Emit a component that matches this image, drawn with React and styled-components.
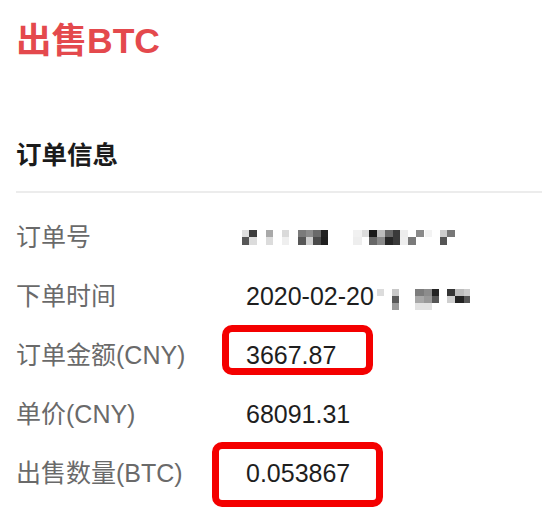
import styled, { createGlobalStyle } from "styled-components";

const GlobalStyle = createGlobalStyle`
    html, body {
        margin: 0;
        padding: 0;
        background: #ffffff;
    }
    body {
        font-family: "Liberation Sans", "Noto Sans CJK SC", sans-serif;
        -webkit-font-smoothing: antialiased;
    }
`;

const Page = styled.div`
    width: 542px;
    height: 514px;
    overflow: hidden;
    padding: 21px 0 0 16px;
    box-sizing: border-box;
`;

const Title = styled.h1`
    margin: 0;
    font-size: 35.5px;
    line-height: 40px;
    font-weight: 700;
    color: #e4494d;
`;

const SectionTitle = styled.h2`
    margin: 76px 0 0;
    font-size: 25.5px;
    line-height: 36px;
    font-weight: 700;
    color: #1b1b1b;
`;

const Divider = styled.div`
    margin-top: 18px;
    height: 2px;
    background: #ececec;
`;

const List = styled.div`
    margin-top: 15px;
    display: flex;
    flex-direction: column;
`;

const Row = styled.div`
    display: grid;
    grid-template-columns: 230px 1fr;
    height: 59px;
    line-height: 59px;
    font-size: 25px;
`;

const Label = styled.span`
    color: #6a6a6a;
    white-space: nowrap;
`;

const Value = styled.span`
    position: relative;
    color: #1e1e1e;
    display: flex;
    align-items: center;
    white-space: nowrap;
`;

const Highlight = styled.span`
    position: absolute;
    left: ${(p) => p.$left}px;
    top: ${(p) => p.$top}px;
    width: ${(p) => p.$width}px;
    height: ${(p) => p.$height}px;
    border: 7px solid #f40000;
    border-radius: 10px;
    box-sizing: border-box;
    pointer-events: none;
`;

const Mosaic = styled.svg`
    display: block;
    margin-left: ${(p) => p.$shift || 0}px;
    margin-top: ${(p) => p.$lift || 0}px;
`;

// pixelated (censored) cells: [x, y, w, h, colour]
const orderNoCells = [
    [0, 0, 7, 7, "#dedede"], [7, 0, 8, 7, "#3c3c3c"],
    [0, 7, 7, 8, "#575757"], [7, 7, 8, 8, "#dcdcdc"],
    [24, 0, 7, 7, "#a9a9a9"], [24, 7, 7, 8, "#dcdcdc"],
    [40, 0, 7, 7, "#dadada"], [40, 7, 7, 8, "#efefef"],
    [56, 0, 8, 7, "#7b7b7b"], [64, 0, 7, 7, "#8c8c8c"], [71, 0, 8, 7, "#6a6a6a"], [79, 0, 7, 7, "#222"],
    [56, 7, 8, 8, "#575757"], [64, 7, 7, 8, "#cfcfcf"], [71, 7, 8, 8, "#4a4a4a"], [79, 7, 7, 8, "#1f1f1f"],
    [111, 0, 9, 7, "#f1f1f1"], [120, 0, 7, 7, "#dcdcdc"], [127, 0, 8, 7, "#1a1a1a"], [135, 0, 8, 7, "#bcbcbc"],
    [143, 0, 8, 7, "#676767"], [151, 0, 7, 7, "#3a3a3a"], [158, 0, 8, 7, "#ececec"], [174, 0, 8, 7, "#8a8a8a"],
    [183, 0, 7, 7, "#f3f3f3"],
    [111, 7, 9, 8, "#eeeeee"], [127, 7, 8, 8, "#686868"], [135, 7, 8, 8, "#8a8a8a"], [143, 7, 8, 8, "#262626"],
    [151, 7, 7, 8, "#3a3a3a"], [158, 7, 8, 8, "#eeeeee"], [166, 7, 8, 8, "#7a7a7a"],
    [198, 0, 7, 7, "#cccccc"], [205, 0, 8, 7, "#777"],
    [198, 7, 7, 8, "#555"],
];

const timeCells = [
    [0, 0, 7, 7, "#dcdcdc"],
    [15, 0, 7, 7, "#c8c8c8"], [15, 7, 7, 7, "#595959"], [15, 14, 7, 7, "#9a9a9a"],
    [38, 0, 9, 7, "#7c7c7c"], [47, 0, 8, 7, "#8c8c8c"], [38, 7, 9, 7, "#a8a8a8"], [47, 7, 8, 7, "#999"],
    [38, 14, 17, 7, "#e2e2e2"],
    [55, 0, 7, 7, "#232323"], [55, 7, 7, 7, "#565656"],
    [70, 0, 8, 7, "#353535"], [78, 0, 9, 7, "#bdbdbd"], [87, 0, 6, 7, "#cccccc"],
    [70, 7, 8, 7, "#cfcfcf"], [78, 7, 9, 7, "#222"], [87, 7, 6, 7, "#575757"],
];

const PixelBlock = ({ cells, width, height, shift, lift }) => (
    <Mosaic width={width} height={height} viewBox={`0 0 ${width} ${height}`} $shift={shift} $lift={lift}>
        {cells.map(([x, y, w, h, fill], i) => (
            <rect key={i} x={x} y={y} width={w} height={h} fill={fill} />
        ))}
    </Mosaic>
);

const App = () => {
    const rows = [
        {
            id: "no",
            label: "订单号",
            value: <PixelBlock cells={orderNoCells} width={214} height={15} shift={-4} lift={0} />,
        },
        {
            id: "time",
            label: "下单时间",
            value: (
                <>
                    2020-02-20
                    <PixelBlock cells={timeCells} width={94} height={21} shift={3} lift={5} />
                </>
            ),
        },
        {
            id: "amount",
            label: "订单金额(CNY)",
            value: "3667.87",
            box: { left: -24, top: -1, width: 151, height: 50 },
        },
        { id: "price", label: "单价(CNY)", value: "68091.31" },
        {
            id: "qty",
            label: "出售数量(BTC)",
            value: "0.053867",
            box: { left: -34, top: -2, width: 171, height: 65 },
        },
    ];

    return (
        <>
            <GlobalStyle />
            <Page>
                <Title>出售BTC</Title>
                <SectionTitle>订单信息</SectionTitle>
                <Divider />
                <List>
                    {rows.map(({ id, label, value, box }) => (
                        <Row key={id}>
                            <Label>{label}</Label>
                            <Value>
                                {value}
                                {box && (
                                    <Highlight
                                        $left={box.left}
                                        $top={box.top}
                                        $width={box.width}
                                        $height={box.height}
                                    />
                                )}
                            </Value>
                        </Row>
                    ))}
                </List>
            </Page>
        </>
    );
};

export default App;
